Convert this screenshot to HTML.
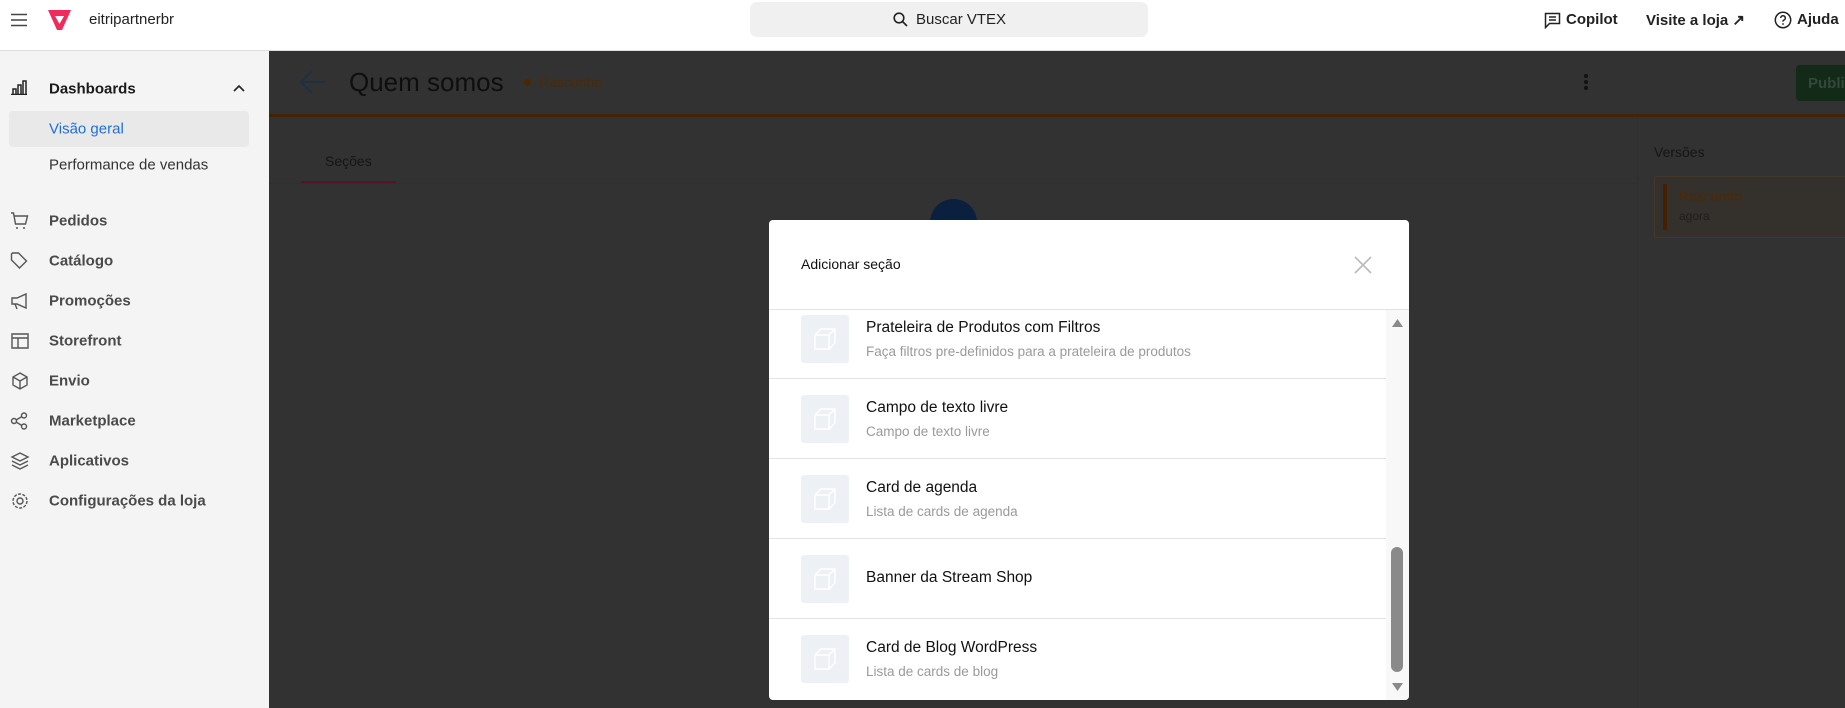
<!DOCTYPE html>
<html><head><meta charset="utf-8">
<style>
*{box-sizing:border-box;margin:0;padding:0}
body{width:1845px;height:708px;overflow:hidden;font-family:"Liberation Sans",Arial,sans-serif;background:#323232;position:relative}
.abs{position:absolute}
.hdr{left:0;top:0;width:1845px;height:51px;background:#fff;border-bottom:1px solid #ddd}
.side{left:0;top:51px;width:269px;height:657px;background:#f4f4f4}
.nav{position:absolute;left:49px;font-size:15px;font-weight:600;color:#4a4a4a;transform:translateY(-50%)}
.ic{position:absolute;left:10px;transform:translateY(-50%)}
.row{position:absolute;left:0;width:617px;height:80px;border-bottom:1px solid #e3e3e3}
.row .box{position:absolute;left:32px;top:16px;width:48px;height:48px;background:#edf1f5;border-radius:3px}
.row .box svg{position:absolute;left:12px;top:12px}
.row .t{position:absolute;left:97px;font-size:15.5px;color:#111}
.row .s{position:absolute;left:97px;font-size:13.5px;color:#9a9a9a}
</style></head><body>
<div class="abs hdr"></div>
<svg class="abs" style="left:11px;top:13px" width="16" height="14" viewBox="0 0 16 14"><path d="M0 1.5h16M0 7h16M0 12.5h16" stroke="#444" stroke-width="1.6"/></svg>
<svg class="abs" style="left:47px;top:10px" width="25" height="20" viewBox="0 0 25 20"><path d="M1 0h23l-9 20h-5z" fill="#f2295b"/><path d="M8 6h9l-4.5 8z" fill="#fff"/></svg>
<div class="abs" style="left:89px;top:11px;font-size:15px;color:#222">eitripartnerbr</div>
<div class="abs" style="left:750px;top:2px;width:398px;height:35px;background:#f0f0f0;border-radius:7px"></div>
<svg class="abs" style="left:893px;top:12px" width="15" height="15" viewBox="0 0 15 15"><circle cx="6" cy="6" r="4.8" fill="none" stroke="#222" stroke-width="1.6"/><path d="M9.5 9.5l4.5 4.5" stroke="#222" stroke-width="1.6"/></svg>
<div class="abs" style="left:916px;top:11px;font-size:15px;color:#222">Buscar VTEX</div>
<svg class="abs" style="left:1544px;top:12px" width="17" height="17" viewBox="0 0 17 17"><path d="M1.5 1.5h14v10h-10l-4 4z" fill="none" stroke="#222" stroke-width="1.5"/><path d="M5 5h7M5 8h7" stroke="#222" stroke-width="1.4"/></svg>
<div class="abs" style="left:1566px;top:11px;font-size:15px;font-weight:600;color:#222">Copilot</div>
<div class="abs" style="left:1646px;top:11px;font-size:15px;font-weight:600;color:#222">Visite a loja ↗</div>
<svg class="abs" style="left:1774px;top:11px" width="18" height="18" viewBox="0 0 18 18"><circle cx="9" cy="9" r="7.7" fill="none" stroke="#222" stroke-width="1.5"/><path d="M6.7 7a2.3 2.3 0 1 1 3 2.2c-.6.3-.8.7-.8 1.4" fill="none" stroke="#222" stroke-width="1.5"/><circle cx="9" cy="13" r=".9" fill="#222"/></svg>
<div class="abs" style="left:1797px;top:11px;font-size:15px;font-weight:600;color:#222">Ajuda</div>

<div class="abs side"></div>
<svg class="abs" style="left:11px;top:80px" width="16" height="15" viewBox="0 0 16 15"><path d="M0 14.5h16M2 14V9h3v5M7 14V5h3v9M12 14V1h3v13" fill="none" stroke="#222" stroke-width="1.5"/></svg>
<div class="nav" style="top:89px;color:#1a1a1a">Dashboards</div>
<svg class="abs" style="left:233px;top:84px" width="12" height="8" viewBox="0 0 12 8"><path d="M1 7l5-5 5 5" fill="none" stroke="#222" stroke-width="1.6"/></svg>
<div class="abs" style="left:9px;top:111px;width:240px;height:36px;background:#e9e9e9;border-radius:4px"></div>
<div class="nav" style="top:129px;color:#1f6fd6;font-weight:400">Visão geral</div>
<div class="nav" style="top:165px;color:#333;font-weight:400">Performance de vendas</div>
<svg class="ic" style="top:221px" width="20" height="18" viewBox="0 0 20 18"><path d="M1 1h2.5l2 11h10l2-8H4.5" fill="none" stroke="#555" stroke-width="1.4"/><circle cx="7" cy="16" r="1" fill="#555"/><circle cx="14" cy="16" r="1" fill="#555"/></svg>
<div class="nav" style="top:221px">Pedidos</div>
<svg class="ic" style="top:261px" width="20" height="18" viewBox="0 0 20 18"><path d="M1.5 2v6l8 8 7-7-8-8h-6z" fill="none" stroke="#555" stroke-width="1.4"/></svg>
<div class="nav" style="top:261px">Catálogo</div>
<svg class="ic" style="top:301px" width="20" height="18" viewBox="0 0 20 18"><path d="M2 6h5l9-4v14l-9-4H2zM5 12l2 5" fill="none" stroke="#555" stroke-width="1.4"/></svg>
<div class="nav" style="top:301px">Promoções</div>
<svg class="ic" style="top:341px" width="20" height="18" viewBox="0 0 20 18"><path d="M2 2h16v14H2zM2 6h16M8 6v10" fill="none" stroke="#555" stroke-width="1.4"/></svg>
<div class="nav" style="top:341px">Storefront</div>
<svg class="ic" style="top:381px" width="20" height="18" viewBox="0 0 20 18"><path d="M10 1l7 4v8l-7 4-7-4V5zM3 5l7 4 7-4M10 9v8" fill="none" stroke="#555" stroke-width="1.4"/></svg>
<div class="nav" style="top:381px">Envio</div>
<svg class="ic" style="top:421px" width="20" height="18" viewBox="0 0 20 18"><circle cx="4" cy="9" r="2.5" fill="none" stroke="#555" stroke-width="1.4"/><circle cx="14" cy="3.5" r="2.5" fill="none" stroke="#555" stroke-width="1.4"/><circle cx="14" cy="14.5" r="2.5" fill="none" stroke="#555" stroke-width="1.4"/><path d="M6 8l6-3.5M6 10l6 3.5" stroke="#555" stroke-width="1.4"/></svg>
<div class="nav" style="top:421px">Marketplace</div>
<svg class="ic" style="top:461px" width="20" height="18" viewBox="0 0 20 18"><path d="M10 1l8 4-8 4-8-4zM2 9l8 4 8-4M2 13l8 4 8-4" fill="none" stroke="#555" stroke-width="1.4"/></svg>
<div class="nav" style="top:461px">Aplicativos</div>
<svg class="ic" style="top:501px" width="20" height="18" viewBox="0 0 20 18"><circle cx="10" cy="9" r="3" fill="none" stroke="#555" stroke-width="1.4"/><circle cx="10" cy="9" r="7" fill="none" stroke="#555" stroke-width="1.4" stroke-dasharray="3 1.4"/></svg>
<div class="nav" style="top:501px">Configurações da loja</div>

<svg class="abs" style="left:300px;top:70px" width="27" height="24" viewBox="0 0 27 24"><path d="M26 12H2M12 1L1 12l11 11" fill="none" stroke="#1e2f4a" stroke-width="1.8"/></svg>
<div class="abs" style="left:349px;top:67px;font-size:26px;color:#0e0e0e">Quem somos</div>
<div class="abs" style="left:524px;top:79px;width:7px;height:7px;border-radius:50%;background:#4a2700"></div>
<div class="abs" style="left:539px;top:74px;font-size:14px;color:#4a2a08">Rascunho <span style="color:#333">agora</span></div>
<div class="abs" style="left:1584px;top:74px;width:4px;height:4px;border-radius:50%;background:#111;box-shadow:0 6px 0 #111,0 12px 0 #111"></div>
<div class="abs" style="left:1796px;top:65px;width:60px;height:36px;background:#132a18;border-radius:4px;color:#34483a;font-size:15px;font-weight:700;padding:10px 0 0 12px">Public</div>
<div class="abs" style="left:269px;top:114px;width:1576px;height:3px;background:#432305"></div>
<div class="abs" style="left:1637px;top:117px;width:1px;height:591px;background:#2f2f2f"></div>
<div class="abs" style="left:269px;top:183px;width:1368px;height:1px;background:#2f2f2f"></div>
<div class="abs" style="left:325px;top:153px;font-size:14px;color:#151515">Seções</div>
<div class="abs" style="left:301px;top:181px;width:95px;height:2px;background:#5a1224"></div>
<div class="abs" style="left:1654px;top:144px;font-size:14px;color:#151515">Versões</div>
<div class="abs" style="left:1654px;top:176px;width:200px;height:62px;background:#34302b;border:1px solid #463727;border-radius:3px"></div>
<div class="abs" style="left:1663px;top:184px;width:4px;height:46px;background:#432100"></div>
<div class="abs" style="left:1679px;top:188px;font-size:14px;color:#4a2a06">Rascunho</div>
<div class="abs" style="left:1679px;top:209px;font-size:12px;color:#1e1e1e">agora</div>
<div class="abs" style="left:930px;top:199px;width:47px;height:47px;border-radius:50%;background:#0b1f3f"></div>

<div class="abs" style="left:769px;top:220px;width:640px;height:480px;background:#fff;border-radius:4px;overflow:hidden">
  <div class="abs" style="left:32px;top:36px;font-size:14px;color:#111">Adicionar seção</div>
  <svg class="abs" style="left:585px;top:36px" width="18" height="18" viewBox="0 0 18 18"><path d="M1 1l16 16M17 1L1 17" stroke="#bbb" stroke-width="1.6"/></svg>
  <div class="abs" style="left:0;top:89px;width:640px;height:1px;background:#e3e3e3"></div>
  <div class="abs" style="left:0;top:90px;width:640px;height:390px;overflow:hidden">
    <div class="abs" style="left:0;top:-11px;width:617px">
      <div class="row" style="top:0"><div class="box"><svg width="24" height="24" viewBox="0 0 24 24"><path d="M2 8l6-6h14v14l-6 6H2zM2 8h14v14M16 8l6-6" fill="none" stroke="#fff" stroke-width="1.4"/></svg></div><div class="t" style="top:20px">Prateleira de Produtos com Filtros</div><div class="s" style="top:45px">Faça filtros pre-definidos para a prateleira de produtos</div></div>
      <div class="row" style="top:80px"><div class="box"><svg width="24" height="24" viewBox="0 0 24 24"><path d="M2 8l6-6h14v14l-6 6H2zM2 8h14v14M16 8l6-6" fill="none" stroke="#fff" stroke-width="1.4"/></svg></div><div class="t" style="top:20px">Campo de texto livre</div><div class="s" style="top:45px">Campo de texto livre</div></div>
      <div class="row" style="top:160px"><div class="box"><svg width="24" height="24" viewBox="0 0 24 24"><path d="M2 8l6-6h14v14l-6 6H2zM2 8h14v14M16 8l6-6" fill="none" stroke="#fff" stroke-width="1.4"/></svg></div><div class="t" style="top:20px">Card de agenda</div><div class="s" style="top:45px">Lista de cards de agenda</div></div>
      <div class="row" style="top:240px"><div class="box"><svg width="24" height="24" viewBox="0 0 24 24"><path d="M2 8l6-6h14v14l-6 6H2zM2 8h14v14M16 8l6-6" fill="none" stroke="#fff" stroke-width="1.4"/></svg></div><div class="t" style="top:30px">Banner da Stream Shop</div></div>
      <div class="row" style="top:320px;border:none"><div class="box"><svg width="24" height="24" viewBox="0 0 24 24"><path d="M2 8l6-6h14v14l-6 6H2zM2 8h14v14M16 8l6-6" fill="none" stroke="#fff" stroke-width="1.4"/></svg></div><div class="t" style="top:20px">Card de Blog WordPress</div><div class="s" style="top:45px">Lista de cards de blog</div></div>
    </div>
    <div class="abs" style="left:617px;top:0;width:23px;height:390px;background:#f8f8f8"></div>
    <svg class="abs" style="left:622px;top:8px" width="13" height="10" viewBox="0 0 13 10"><path d="M6.5 1L12 9H1z" fill="#8a8a8a"/></svg>
    <div class="abs" style="left:622px;top:237px;width:12px;height:125px;background:#8a8a8a;border-radius:6px"></div>
    <svg class="abs" style="left:622px;top:372px" width="13" height="10" viewBox="0 0 13 10"><path d="M6.5 9L12 1H1z" fill="#8a8a8a"/></svg>
  </div>
</div>
</body></html>
